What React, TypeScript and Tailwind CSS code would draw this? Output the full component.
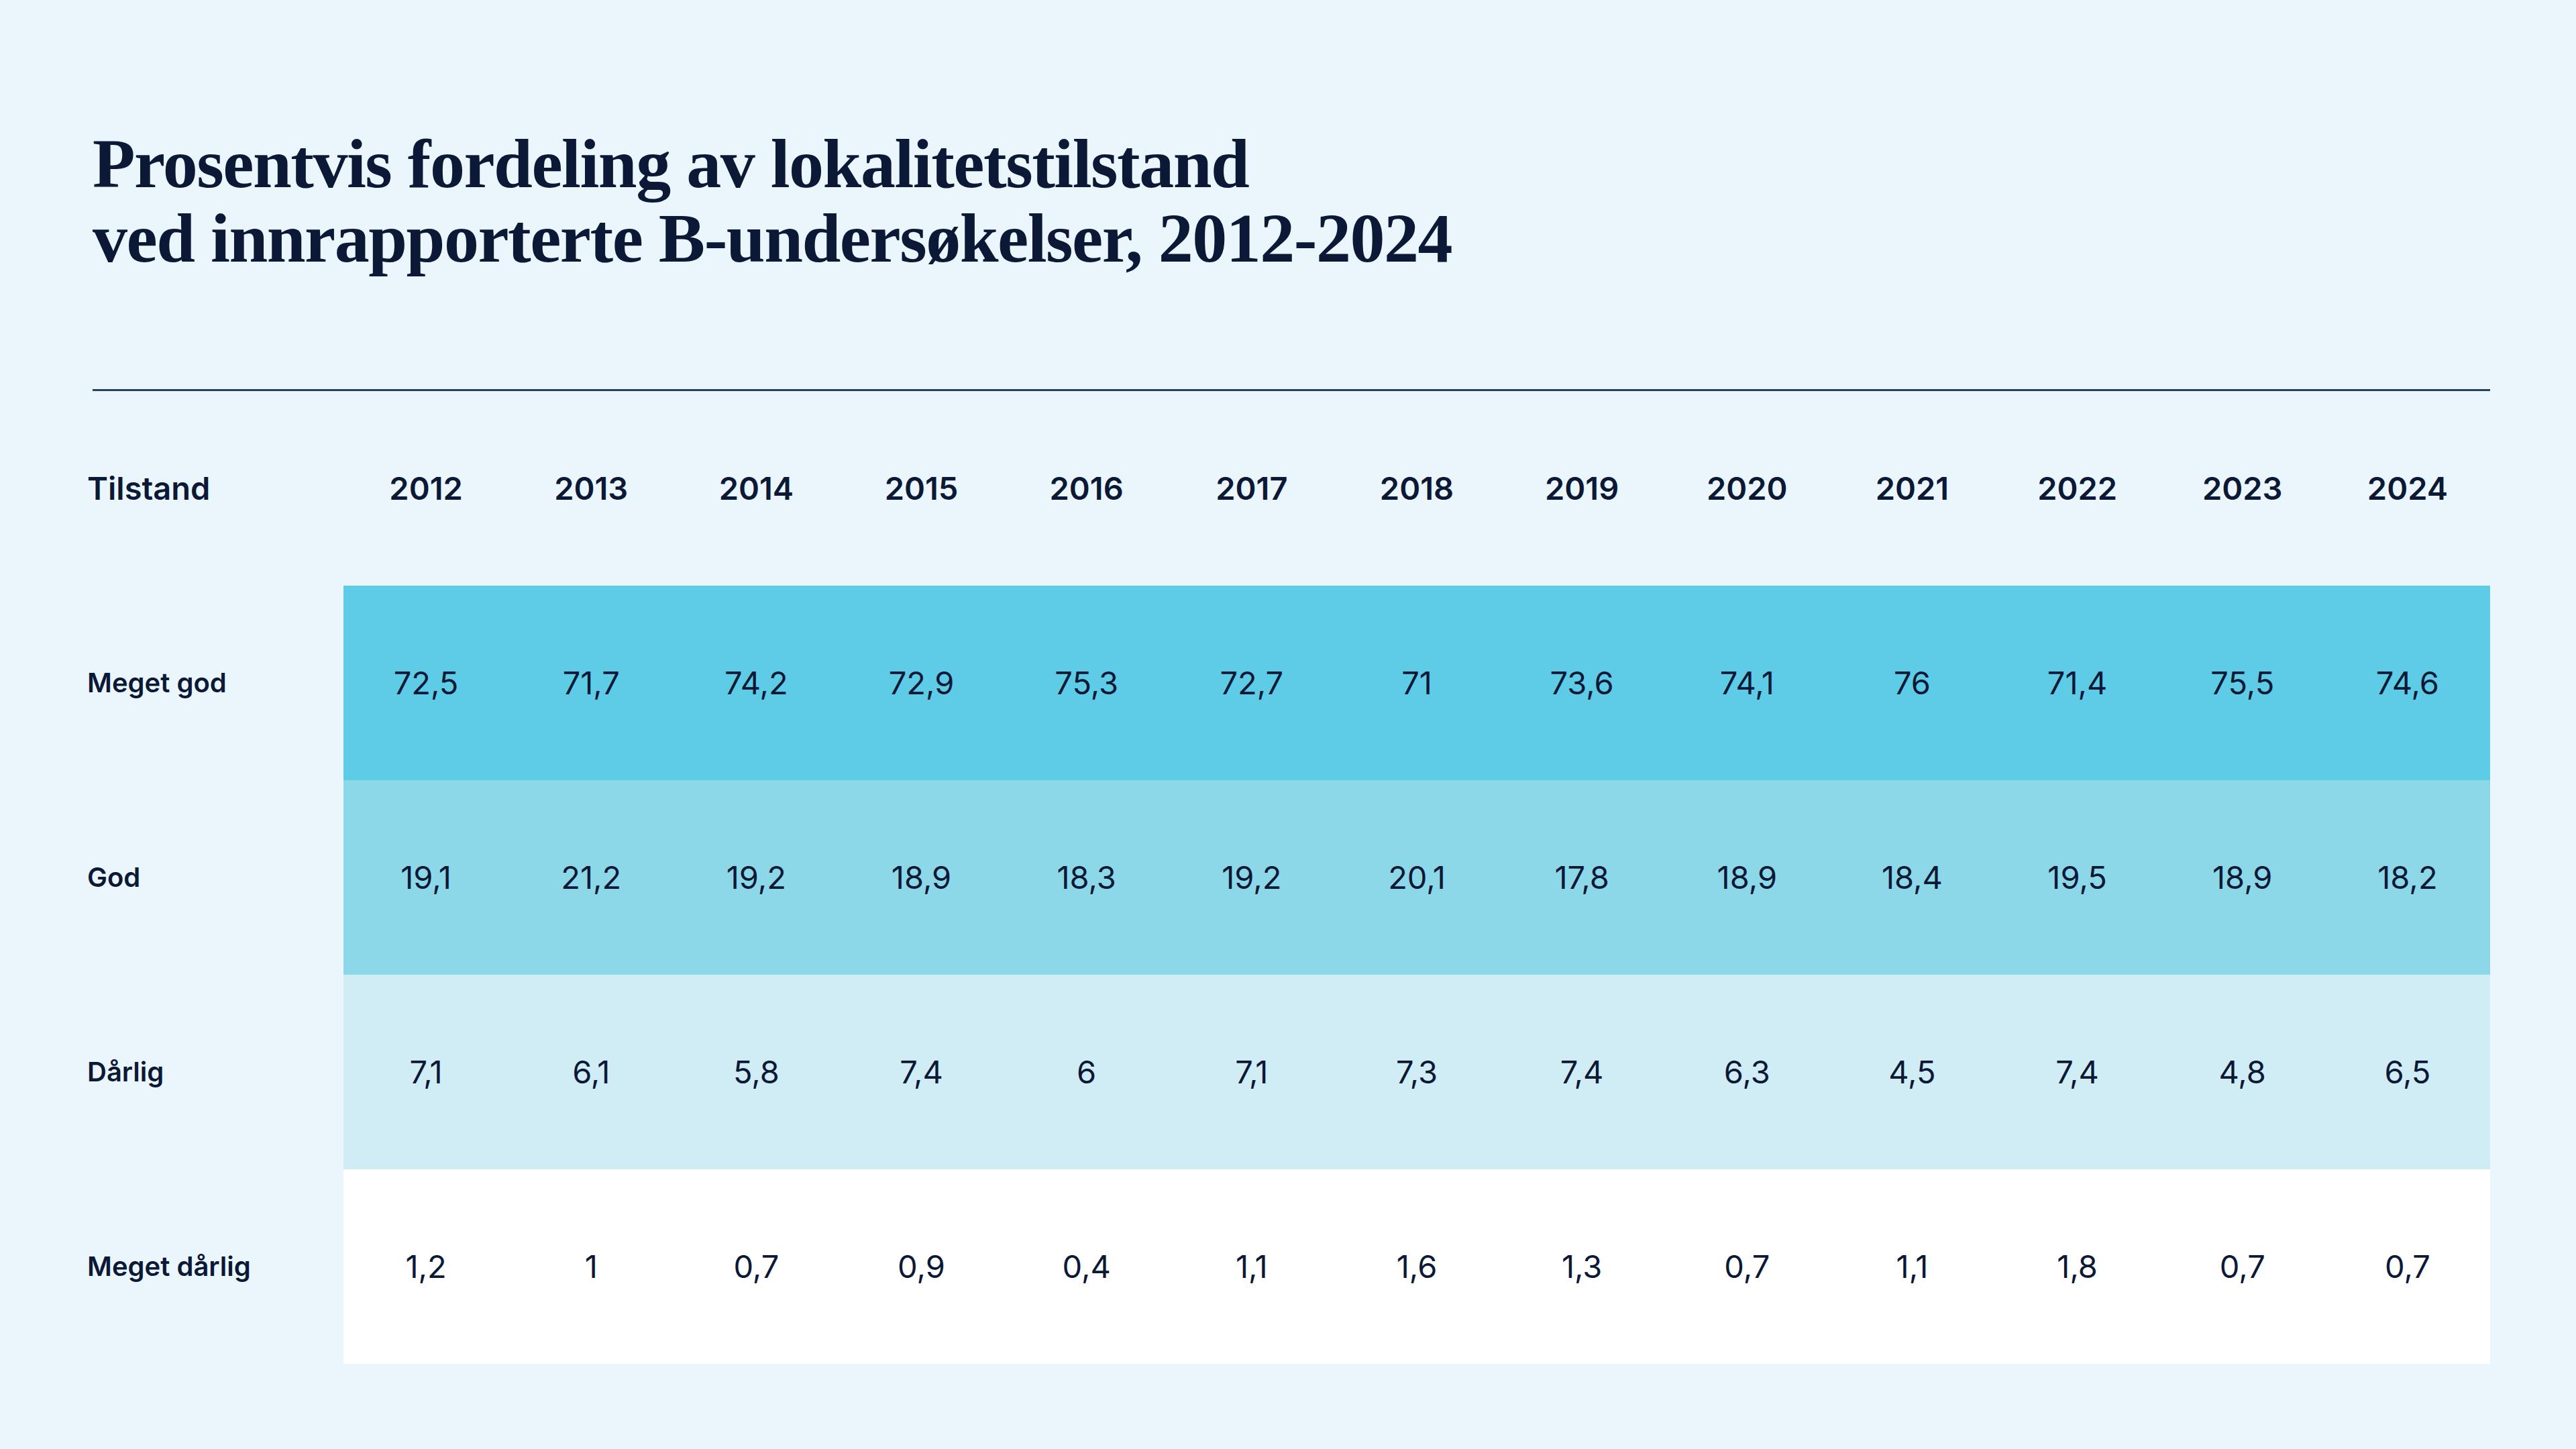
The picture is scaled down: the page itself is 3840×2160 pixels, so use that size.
const years = [2012, 2013, 2014, 2015, 2016, 2017, 2018, 2019, 2020, 2021, 2022, 2023, 2024];

interface Row {
  label: string;
  bg: string;
  values: string[];
}

const rows: Row[] = [
  {
    label: "Meget god",
    bg: "bg-[#5ecce6]",
    values: ["72,5", "71,7", "74,2", "72,9", "75,3", "72,7", "71", "73,6", "74,1", "76", "71,4", "75,5", "74,6"],
  },
  {
    label: "God",
    bg: "bg-[#8cd8e8]",
    values: ["19,1", "21,2", "19,2", "18,9", "18,3", "19,2", "20,1", "17,8", "18,9", "18,4", "19,5", "18,9", "18,2"],
  },
  {
    label: "Dårlig",
    bg: "bg-[#d0edf5]",
    values: ["7,1", "6,1", "5,8", "7,4", "6", "7,1", "7,3", "7,4", "6,3", "4,5", "7,4", "4,8", "6,5"],
  },
  {
    label: "Meget dårlig",
    bg: "bg-white",
    values: ["1,2", "1", "0,7", "0,9", "0,4", "1,1", "1,6", "1,3", "0,7", "1,1", "1,8", "0,7", "0,7"],
  },
];

function App() {
  return (
    <div className="w-[3840px] h-[2160px] bg-[#ebf6fc] text-[#0b1936] pl-[130px] pt-[188px] font-['Inter',sans-serif]">
      {/* Tittel */}
      <h1 className="ml-[8px] font-['Liberation_Serif',serif] font-bold text-[104px] leading-[111px] tracking-[-1.5px]">
        Prosentvis fordeling av lokalitetstilstand
        <br />
        ved innrapporterte B-undersøkelser, 2012-2024
      </h1>

      <div className="ml-[8px] mt-[170px] w-[3574px] h-[3px] bg-[#2b3f5f]" />

      {/* Tabell */}
      <div className="w-[3582px] grid grid-cols-[382px_repeat(13,1fr)]">
        <div className="h-[290px] flex items-center text-[47px] font-semibold">Tilstand</div>
        {years.map((y) => (
          <div key={y} className="h-[290px] flex items-center justify-center text-[47px] font-semibold">
            {y}
          </div>
        ))}

        {rows.map((row) => (
          <div key={row.label} className="contents">
            <div className="h-[290px] flex items-center text-[40px] font-semibold">{row.label}</div>
            {row.values.map((v, i) => (
              <div key={i} className={`h-[290px] flex items-center justify-center text-[47px] ${row.bg}`}>
                {v}
              </div>
            ))}
          </div>
        ))}
      </div>
    </div>
  );
}

export default App;
